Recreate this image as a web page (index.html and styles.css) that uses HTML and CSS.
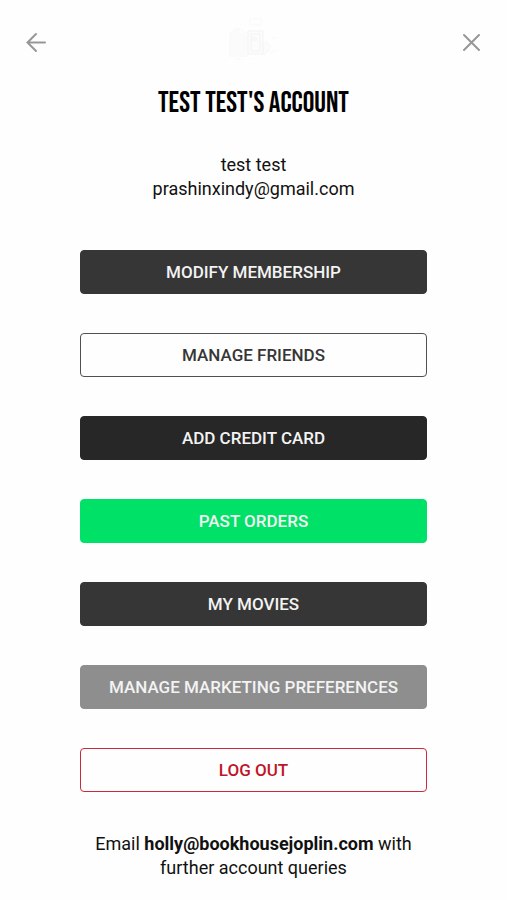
FILE: index.html
```html
<!DOCTYPE html>
<html lang="en">
<head>
<meta charset="utf-8">
<meta name="viewport" content="width=device-width, initial-scale=1">
<title>Account</title>
<link rel="stylesheet" href="styles.css">
</head>
<body>
<header class="bar">
  <button class="icon-button" type="button" aria-label="Back">
    <svg viewBox="0 0 24 24"><path d="M21 12.500H3.500M12 4L3.500 12.500L12 21"/></svg>
  </button>
  <svg class="logo" viewBox="-2 0 56 48" aria-hidden="true">
    <path class="logo-fill" d="M1 17q7-11 13-2l6 2v22H1zM34 24q7-2 9 7l-8 9z"/>
    <path d="M22 1h11v6H22zM2 36V16q7-10 14-2v11H5M16 15l5-1v21M37 23l6 5-6 8M43 21l6-2M42 35l7-3M7 41h7M24 41h3"/>
    <path class="logo-book" d="M20 13h15v23H20zM23 16h9v17h-9zM23 22h7M24 20h5"/>
  </svg>
  <button class="icon-button" type="button" aria-label="Close">
    <svg viewBox="0 0 24 24"><path d="M5 5l15 15M20 5L5 20"/></svg>
  </button>
</header>
<main class="account">
  <h1 class="title">TEST TEST'S ACCOUNT</h1>
  <p class="details">test test<br>prashinxindy@gmail.com</p>
  <div class="actions">
    <button class="action dark" type="button">MODIFY MEMBERSHIP</button>
    <button class="action outline" type="button">MANAGE FRIENDS</button>
    <button class="action darker" type="button">ADD CREDIT CARD</button>
    <button class="action green" type="button">PAST ORDERS</button>
    <button class="action dark" type="button">MY MOVIES</button>
    <button class="action gray" type="button">MANAGE MARKETING PREFERENCES</button>
    <button class="action danger" type="button">LOG OUT</button>
  </div>
  <p class="help">Email <strong>holly@bookhousejoplin.com</strong> with<br>further account queries</p>
</main>
</body>
</html>
```
FILE: styles.css
```css
* {
  box-sizing: border-box;
}

body {
  margin: 0;
  background: #fefefe;
  color: #111;
  font: 18px/24px Roboto, sans-serif;
}

.bar {
  display: flex;
  align-items: center;
  justify-content: space-between;
  padding: 18px 24px 0;
}

.icon-button {
  display: flex;
  padding: 0;
  border: 0;
  background: none;
  cursor: pointer;
}

.icon-button svg {
  width: 24px;
  height: 24px;
  fill: none;
  stroke: #979797;
  stroke-width: 2;
  stroke-linecap: round;
}

.logo {
  width: 56px;
  height: 48px;
  fill: none;
  stroke: #f9f9f9;
}

.logo .logo-fill {
  fill: #fbfbfb;
  stroke: none;
}

.logo .logo-book {
  fill: #fcfcfc;
  stroke: #f3f3f3;
}

.account {
  padding: 0 80px;
  text-align: center;
}

.title {
  margin: 22px 0 0;
  color: #000;
  font: 400 29px/32px "Bebas Neue", "Liberation Sans Narrow", "Roboto Condensed", sans-serif;
  white-space: nowrap;
}

.details {
  margin: 33px 0 49px;
}

.actions {
  display: grid;
  gap: 39px;
}

.action {
  height: 44px;
  padding: 0;
  border: 1px solid transparent;
  border-radius: 4px;
  color: #f3f3f3;
  font: 500 17px/24px Roboto, sans-serif;
  cursor: pointer;
}

.dark {
  background: #363636;
  border-color: #363636;
}

.darker {
  background: #272727;
  border-color: #272727;
}

.green {
  background: #00e267;
  border-color: #00e267;
}

.gray {
  background: #8e8e8e;
  border-color: #8e8e8e;
}

.outline {
  background: #fefefe;
  border-color: #505050;
  color: #363636;
}

.danger {
  background: #fefefe;
  border-color: #c92b3b;
  color: #be1528;
}

.help {
  margin: 40px 0 20px;
}
```
